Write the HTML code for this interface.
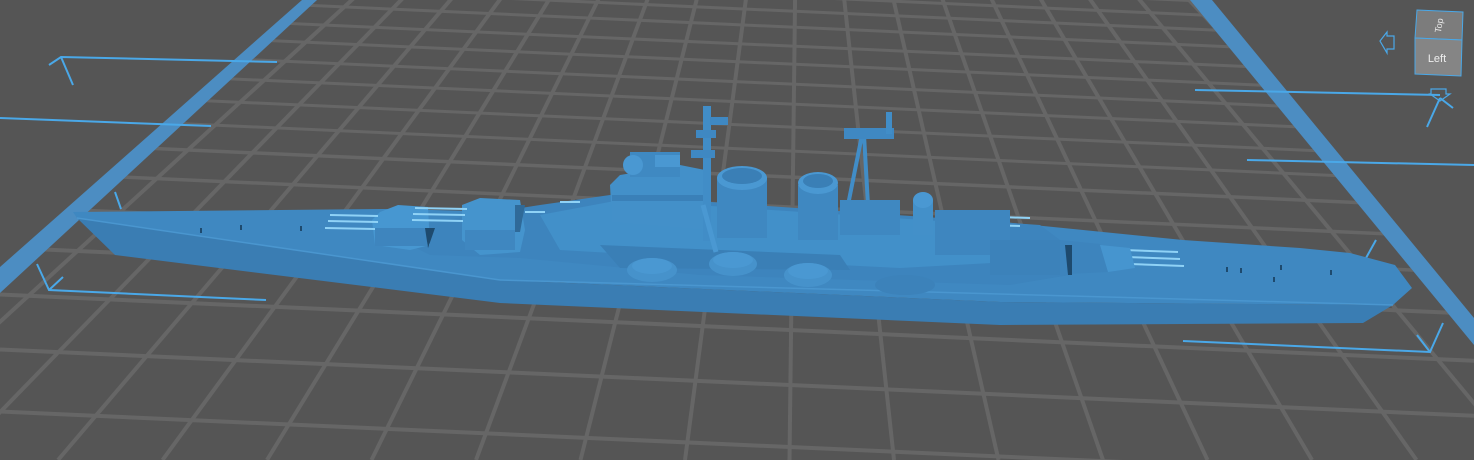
<!DOCTYPE html>
<html><head><meta charset="utf-8"><style>
html,body{margin:0;padding:0;background:#555;overflow:hidden;width:1474px;height:460px}
svg{display:block}
</style></head><body>
<svg width="1474" height="460" viewBox="0 0 1474 460" xmlns="http://www.w3.org/2000/svg">
<defs>
<clipPath id="plate"><polygon points="317,0 1190,0 1474,345 1474,460 0,460 0,293"/></clipPath>
</defs>
<rect width="1474" height="460" fill="#555555"/>
<g clip-path="url(#plate)" stroke="#666666" stroke-width="4">
<g>
<line x1="800" y1="-410" x2="-987" y2="460"/><line x1="800" y1="-410" x2="-882.5" y2="460"/>
<line x1="800" y1="-410" x2="-778" y2="460"/><line x1="800" y1="-410" x2="-673.5" y2="460"/>
<line x1="800" y1="-410" x2="-569" y2="460"/><line x1="800" y1="-410" x2="-464.5" y2="460"/>
<line x1="800" y1="-410" x2="-360" y2="460"/><line x1="800" y1="-410" x2="-255.5" y2="460"/>
<line x1="800" y1="-410" x2="-151" y2="460"/><line x1="800" y1="-410" x2="-46.5" y2="460"/>
<line x1="800" y1="-410" x2="58" y2="460"/><line x1="800" y1="-410" x2="162.5" y2="460"/>
<line x1="800" y1="-410" x2="267" y2="460"/><line x1="800" y1="-410" x2="371.5" y2="460"/>
<line x1="800" y1="-410" x2="476" y2="460"/><line x1="800" y1="-410" x2="580.5" y2="460"/>
<line x1="800" y1="-410" x2="685" y2="460"/><line x1="800" y1="-410" x2="789.5" y2="460"/>
<line x1="800" y1="-410" x2="894" y2="460"/><line x1="800" y1="-410" x2="998.5" y2="460"/>
<line x1="800" y1="-410" x2="1103" y2="460"/><line x1="800" y1="-410" x2="1207.5" y2="460"/>
<line x1="800" y1="-410" x2="1312" y2="460"/><line x1="800" y1="-410" x2="1416.5" y2="460"/>
<line x1="800" y1="-410" x2="1521" y2="460"/><line x1="800" y1="-410" x2="1625.5" y2="460"/>
<line x1="800" y1="-410" x2="1730" y2="460"/><line x1="800" y1="-410" x2="1834.5" y2="460"/>
<line x1="800" y1="-410" x2="1939" y2="460"/><line x1="800" y1="-410" x2="2043.5" y2="460"/>
<line x1="800" y1="-410" x2="2148" y2="460"/><line x1="800" y1="-410" x2="2252.5" y2="460"/>
<line x1="800" y1="-410" x2="2357" y2="460"/><line x1="800" y1="-410" x2="2461.5" y2="460"/>
</g>
<g>
<line x1="0" y1="411.5" x2="1474" y2="477.8"/>
<line x1="0" y1="349.5" x2="1474" y2="415.8"/>
<line x1="0" y1="294.5" x2="1474" y2="360.8"/>
<line x1="0" y1="247.5" x2="1474" y2="313.8"/>
<line x1="0" y1="206.5" x2="1474" y2="272.8" stroke-width="3.5"/>
<line x1="0" y1="171.5" x2="1474" y2="237.8" stroke-width="3.5"/>
<line x1="0" y1="141.5" x2="1474" y2="207.8" stroke-width="3.5"/>
<line x1="0" y1="115.5" x2="1474" y2="181.8" stroke-width="3"/>
<line x1="0" y1="91.5" x2="1474" y2="157.8" stroke-width="3"/>
<line x1="0" y1="68.5" x2="1474" y2="134.8" stroke-width="3"/>
<line x1="0" y1="48.5" x2="1474" y2="114.8" stroke-width="3"/>
<line x1="0" y1="28.5" x2="1474" y2="94.8" stroke-width="3"/>
<line x1="0" y1="10.5" x2="1474" y2="76.8" stroke-width="3"/>
<line x1="0" y1="-8.5" x2="1474" y2="57.8" stroke-width="3"/>
<line x1="0" y1="-24.5" x2="1474" y2="41.8" stroke-width="3"/>
<line x1="0" y1="-39" x2="1474" y2="27.3" stroke-width="3"/>
<line x1="0" y1="-53" x2="1474" y2="13.3" stroke-width="3"/>
</g>
</g>
<polygon points="302,0 317,0 0,293 0,267" fill="#4c8dc2"/>
<polygon points="1190,0 1212,0 1474,318 1474,345" fill="#4c8dc2"/>

<g stroke="#4aa8e8" stroke-width="2" fill="none">
<polyline points="49,65 61,57 277,62"/><line x1="61" y1="57" x2="73" y2="85"/>
<line x1="0" y1="118" x2="211" y2="126"/>
<polyline points="37,264 49,290 266,300"/><line x1="49" y1="290" x2="63" y2="277"/>
<line x1="115" y1="192" x2="121" y2="209"/>
<line x1="1195" y1="90" x2="1440" y2="95"/>
<line x1="1247" y1="160" x2="1474" y2="165"/>
<polyline points="1183,341 1430,352 1443,323"/><line x1="1430" y1="352" x2="1417" y2="335"/>
<line x1="1366" y1="258" x2="1376" y2="240"/>
<line x1="1440" y1="98" x2="1427" y2="127"/><line x1="1440" y1="98" x2="1453" y2="108"/>
</g>
<polygon points="1380,41 1387,32 1387,36 1394,36 1394,49 1387,49 1387,53" fill="none" stroke="#4aa8e8" stroke-width="1.2"/>
<polygon points="1431,89 1446,89 1446,94 1450,94 1440,101 1430,94 1431,94" fill="none" stroke="#4aa8e8" stroke-width="1.2"/>
<polygon points="1417,10 1463,12 1462,40 1415,38" fill="#7c7c7c" stroke="#4aa8e8" stroke-width="1"/>
<polygon points="1415,38 1462,40 1461,76 1415,74" fill="#858585" stroke="#4aa8e8" stroke-width="1"/>
<text x="0" y="0" transform="translate(1442,26) rotate(-80)" font-family="Liberation Sans, sans-serif" font-size="9" fill="#e8e8e8" text-anchor="middle">Top</text>
<text x="1437" y="62" font-family="Liberation Sans, sans-serif" font-size="11" fill="#eeeeee" text-anchor="middle">Left</text>

<g>
<polygon points="77,218 500,280 1000,302 1393,305 1363,323 1000,325 500,303 115,255" fill="#3a7db3"/>
<polygon points="73,212 385,209 1003,222 1183,240 1300,248 1350,253 1395,265 1412,288 1393,305 1000,302 500,280 77,218" fill="#3f88c1"/>
<line x1="77" y1="218" x2="500" y2="280" stroke="#4a96cf" stroke-width="1.5"/>
<line x1="500" y1="280" x2="1393" y2="305" stroke="#4a96cf" stroke-width="1.5"/>
<polygon points="380,230 540,205 610,195 1040,225 1060,240 1070,275 1010,285 700,275 520,258 430,255" fill="#3d84bd"/>
<polygon points="540,215 620,200 1000,225 1010,262 900,268 700,258 560,250" fill="#4290c9"/>
<polygon points="600,245 840,255 850,270 620,268" fill="#3a7fb6"/>
<polygon points="380,212 398,205 428,207 430,245 410,250 375,245 372,220" fill="#4797d1"/>
<rect x="375" y="228" width="52" height="18" fill="#3e85be"/>
<polygon points="425,228 435,228 428,248" fill="#1e4a6e"/>
<polygon points="462,205 480,198 520,200 525,230 520,252 480,255 462,240" fill="#4594cd"/>
<polygon points="515,205 525,205 520,232 515,232" fill="#2f6a99"/>
<rect x="465" y="230" width="50" height="20" fill="#3f87c0"/>
<g stroke="#8fd2f6" stroke-width="2">
<line x1="330" y1="215" x2="378" y2="216"/><line x1="328" y1="221" x2="378" y2="222"/><line x1="325" y1="228" x2="375" y2="229"/>
<line x1="415" y1="208" x2="467" y2="209"/><line x1="413" y1="214" x2="465" y2="215"/><line x1="412" y1="220" x2="463" y2="221"/>
<line x1="1124" y1="250" x2="1178" y2="252"/><line x1="1126" y1="257" x2="1180" y2="259"/><line x1="1130" y1="264" x2="1184" y2="266"/>
<line x1="1000" y1="217" x2="1030" y2="218"/><line x1="980" y1="225" x2="1020" y2="226"/>
<line x1="560" y1="202" x2="580" y2="202"/><line x1="525" y1="212" x2="545" y2="212"/>
</g>
<polygon points="610,185 620,175 680,165 705,170 710,200 705,230 612,222" fill="#4390c9"/>
<rect x="630" y="152" width="50" height="25" fill="#3f89c2"/>
<circle cx="633" cy="165" r="10" fill="#4a98d2"/>
<rect x="655" y="155" width="25" height="12" fill="#4a98d2"/>
<rect x="612" y="195" width="95" height="6" fill="#3a80b8"/>
<rect x="703" y="106" width="8" height="135" fill="#418dc7"/>
<rect x="696" y="130" width="20" height="8" fill="#3f88c2"/>
<rect x="691" y="150" width="24" height="8" fill="#3f88c2"/>
<rect x="710" y="117" width="18" height="8" fill="#3f88c2"/>
<line x1="703" y1="205" x2="716" y2="252" stroke="#4a98d2" stroke-width="5"/>
<rect x="717" y="178" width="50" height="60" fill="#3f88c1"/>
<ellipse cx="742" cy="178" rx="25" ry="12" fill="#4a98d2"/>
<ellipse cx="742" cy="176" rx="20" ry="8" fill="#3a7fb6"/>
<rect x="798" y="185" width="40" height="55" fill="#3f88c1"/>
<ellipse cx="818" cy="183" rx="20" ry="11" fill="#4a98d2"/>
<ellipse cx="818" cy="181" rx="15" ry="7" fill="#3a7fb6"/>
<line x1="862" y1="135" x2="848" y2="205" stroke="#418dc7" stroke-width="4"/>
<line x1="864" y1="135" x2="868" y2="205" stroke="#418dc7" stroke-width="4"/>
<rect x="844" y="128" width="50" height="11" fill="#3f88c2"/>
<rect x="886" y="112" width="6" height="22" fill="#418dc7"/>
<rect x="840" y="200" width="60" height="35" fill="#3f88c1"/>
<rect x="913" y="200" width="20" height="35" fill="#4390c9"/>
<ellipse cx="923" cy="200" rx="10" ry="8" fill="#4a98d2"/>
<rect x="935" y="210" width="75" height="45" fill="#3e86bf"/>
<rect x="990" y="240" width="70" height="35" fill="#3c82ba"/>
<ellipse cx="652" cy="270" rx="25" ry="12" fill="#4692cb"/><ellipse cx="652" cy="266" rx="20" ry="8" fill="#4a98d2"/>
<ellipse cx="733" cy="264" rx="24" ry="12" fill="#4692cb"/><ellipse cx="733" cy="260" rx="20" ry="8" fill="#4a98d2"/>
<ellipse cx="808" cy="275" rx="24" ry="12" fill="#4692cb"/><ellipse cx="808" cy="271" rx="20" ry="8" fill="#4a98d2"/>
<ellipse cx="905" cy="285" rx="30" ry="10" fill="#3c82ba"/>
<polygon points="1060,240 1100,244 1108,272 1068,274" fill="#3d84bd"/>
<polygon points="1065,245 1072,245 1072,275 1068,275" fill="#1e4a6e"/>
<polygon points="1100,245 1130,248 1135,268 1108,272" fill="#4695cf"/>
<g fill="#1e4a6e">
<rect x="240" y="225" width="2" height="5"/><rect x="200" y="228" width="2" height="5"/>
<rect x="300" y="226" width="2" height="5"/><rect x="1240" y="268" width="2" height="5"/>
<rect x="1280" y="265" width="2" height="5"/><rect x="1330" y="270" width="2" height="5"/>
<rect x="1273" y="277" width="2" height="5"/><rect x="1226" y="267" width="2" height="5"/>
</g>
</g>
</svg>
</body></html>
